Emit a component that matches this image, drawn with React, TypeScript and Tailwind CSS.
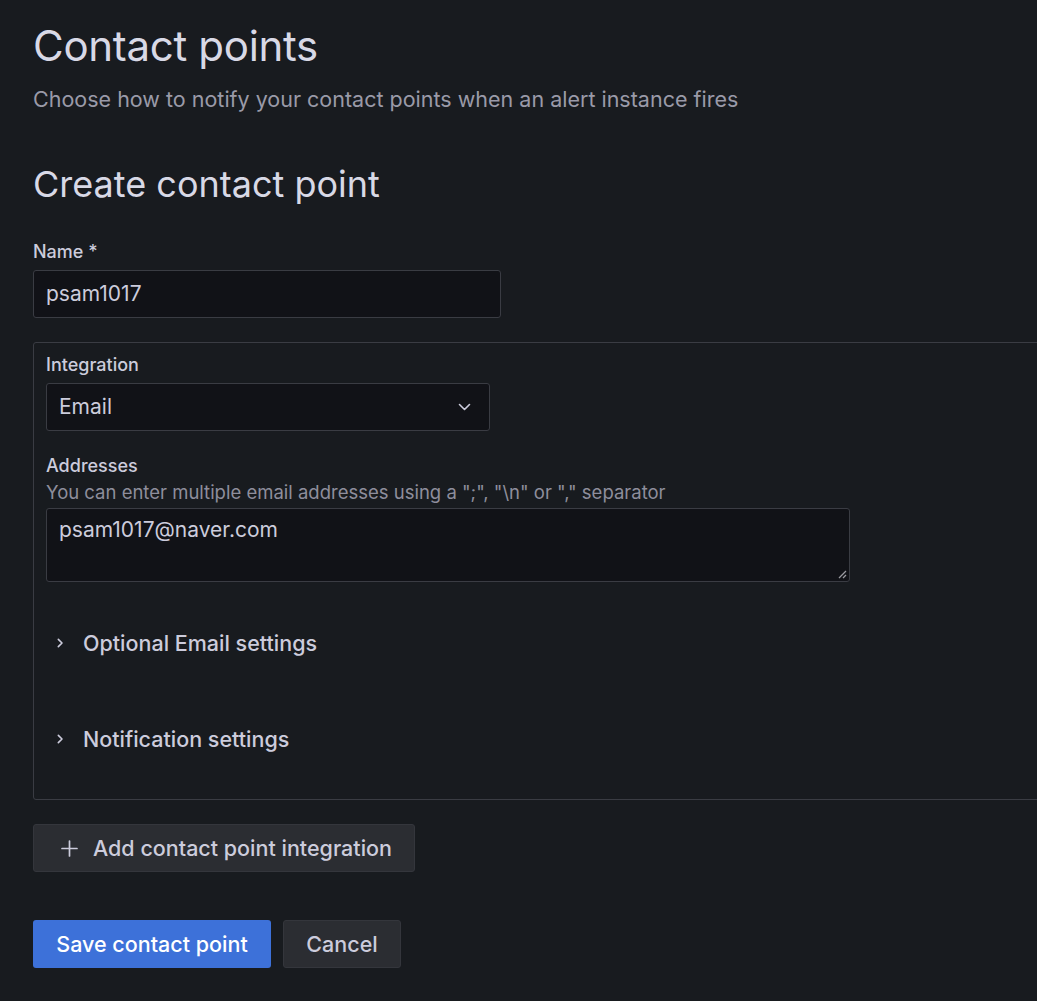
import React from "react";

const font = { fontFamily: "Inter, 'Noto Sans', sans-serif" };

function Chevron() {
  return (
    <svg width="16" height="16" viewBox="0 0 24 24" fill="none" stroke="#ccccdc" strokeWidth="2.4" strokeLinecap="round" strokeLinejoin="round">
      <path d="M9.5 6.5l5.5 5.5-5.5 5.5" />
    </svg>
  );
}

export default function App() {
  return (
    <div className="w-[1037px] h-[1001px] overflow-hidden bg-[#181b1f] text-[#ccccdc]" style={font}>
      <div className="pl-[33px] pt-[20px]">
        <h1 className="text-[42px] leading-[52px] font-normal tracking-[-0.3px] text-[#d8d9e6]">Contact points</h1>
        <p className="mt-[14px] text-[21.5px] leading-[26px] text-[#9a9aa8]">Choose how to notify your contact points when an alert instance fires</p>

        <h2 className="mt-[50px] text-[36px] leading-[44px] font-normal text-[#d8d9e6]">Create contact point</h2>

        <div className="mt-[36px] text-[18px] leading-[20px] font-medium">Name *</div>
        <div className="mt-[8px] w-[468px] h-[48px] rounded-[3px] border border-[#3a3c43] bg-[#111217] flex items-center px-[12px] text-[21px]">psam1017</div>

        <div className="mt-[24px] w-[1100px] h-[458px] rounded-[3px] border border-[#3a3c43] px-[12px] pt-[12px]">
          <div className="text-[18px] leading-[20px] font-medium">Integration</div>
          <div className="mt-[8px] w-[444px] h-[48px] rounded-[3px] border border-[#3a3c43] bg-[#111217] flex items-center justify-between pl-[12px] pr-[18px] text-[21px]">
            <span>Email</span>
            <svg width="13" height="8" viewBox="0 0 13 8" fill="none" stroke="#ccccdc" strokeWidth="1.6" strokeLinecap="round" strokeLinejoin="round">
              <path d="M1.5 1.5l5 5 5-5" />
            </svg>
          </div>

          <div className="mt-[25px] text-[18px] leading-[20px] font-medium">Addresses</div>
          <div className="mt-[5px] text-[18.5px] leading-[22px] text-[#8e8e9c]">You can enter multiple email addresses using a ";", "\n" or "," separator</div>
          <div className="relative mt-[5px] w-[804px] h-[74px] rounded-[3px] border border-[#3a3c43] bg-[#111217] px-[12px] pt-[8px] text-[21px] leading-[26px]">
            psam1017@naver.com
            <svg className="absolute right-[2px] bottom-[2px]" width="10" height="10" viewBox="0 0 10 10" stroke="#9a9aa0" strokeWidth="1.3">
              <path d="M9 2L2 9M9 6L6 9" />
            </svg>
          </div>

          <div className="mt-[46px] flex items-center gap-[15px] h-[30px] pl-[6px] text-[21.5px] font-medium">
            <Chevron />
            <span>Optional Email settings</span>
          </div>
          <div className="mt-[66px] flex items-center gap-[15px] h-[30px] pl-[6px] text-[21.5px] font-medium">
            <Chevron />
            <span>Notification settings</span>
          </div>
        </div>

        <button className="mt-[24px] h-[48px] w-[382px] rounded-[3px] border border-[#34363c] bg-[#2b2d32] flex items-center pl-[27px] gap-[15px] text-[21.5px] font-medium text-[#ccccdc]">
          <svg width="17" height="17" viewBox="0 0 17 17" fill="none" stroke="#ccccdc" strokeWidth="1.7" strokeLinecap="round">
            <path d="M8.5 1v15M1 8.5h15" />
          </svg>
          <span>Add contact point integration</span>
        </button>

        <div className="mt-[48px] flex gap-[12px]">
          <button className="h-[48px] w-[238px] rounded-[3px] bg-[#3d71d9] text-white text-[21.5px] font-medium">Save contact point</button>
          <button className="h-[48px] w-[118px] rounded-[3px] border border-[#34363c] bg-[#2b2d32] text-[21.5px] font-medium text-[#ccccdc]">Cancel</button>
        </div>
      </div>
    </div>
  );
}
